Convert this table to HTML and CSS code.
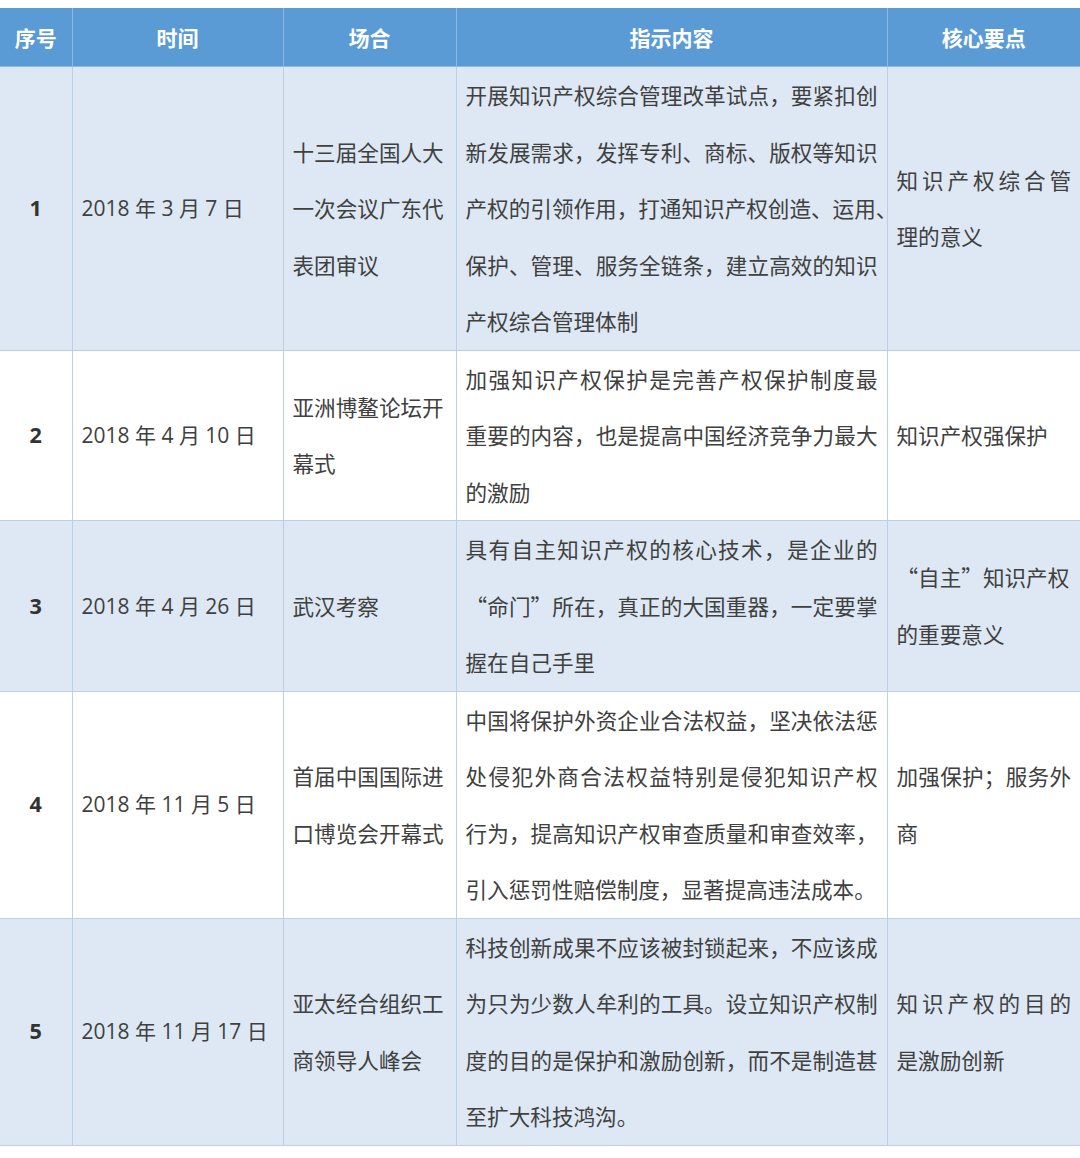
FILE: index.html
```html
<!DOCTYPE html>
<html lang="zh-CN">
<head>
<meta charset="utf-8">
<link rel="stylesheet" href="styles.css">
</head>
<body>
<table class="tbl">
  <colgroup>
    <col class="c1"><col class="c2"><col class="c3"><col class="c4"><col class="c5">
  </colgroup>
  <thead>
    <tr><th>序号</th><th>时间</th><th>场合</th><th>指示内容</th><th>核心要点</th></tr>
  </thead>
  <tbody>
    <tr class="alt">
      <td class="num">1</td>
      <td class="date">2018 年 3 月 7 日</td>
      <td><span class="l">十三届全国人大</span><span class="l">一次会议广东代</span><span class="l">表团审议</span></td>
      <td><span class="l j">开展知识产权综合管理改革试点，要紧扣创</span><span class="l j">新发展需求，发挥专利、商标、版权等知识</span><span class="l j">产权的引领作用，打通知识产权创造、运用、</span><span class="l j">保护、管理、服务全链条，建立高效的知识</span><span class="l">产权综合管理体制</span></td>
      <td><span class="l j">知识产权综合管</span><span class="l">理的意义</span></td>
    </tr>
    <tr>
      <td class="num">2</td>
      <td class="date">2018 年 4 月 10 日</td>
      <td><span class="l">亚洲博鳌论坛开</span><span class="l">幕式</span></td>
      <td><span class="l j">加强知识产权保护是完善产权保护制度最</span><span class="l j">重要的内容，也是提高中国经济竞争力最大</span><span class="l">的激励</span></td>
      <td><span class="l">知识产权强保护</span></td>
    </tr>
    <tr class="alt">
      <td class="num">3</td>
      <td class="date">2018 年 4 月 26 日</td>
      <td><span class="l">武汉考察</span></td>
      <td><span class="l j">具有自主知识产权的核心技术，是企业的</span><span class="l j">“命门”所在，真正的大国重器，一定要掌</span><span class="l">握在自己手里</span></td>
      <td><span class="l">“自主”知识产权</span><span class="l">的重要意义</span></td>
    </tr>
    <tr>
      <td class="num">4</td>
      <td class="date">2018 年 11 月 5 日</td>
      <td><span class="l">首届中国国际进</span><span class="l">口博览会开幕式</span></td>
      <td><span class="l j">中国将保护外资企业合法权益，坚决依法惩</span><span class="l j">处侵犯外商合法权益特别是侵犯知识产权</span><span class="l j">行为，提高知识产权审查质量和审查效率，</span><span class="l">引入惩罚性赔偿制度，显著提高违法成本。</span></td>
      <td><span class="l j">加强保护；服务外</span><span class="l">商</span></td>
    </tr>
    <tr class="alt">
      <td class="num">5</td>
      <td class="date">2018 年 11 月 17 日</td>
      <td><span class="l">亚太经合组织工</span><span class="l">商领导人峰会</span></td>
      <td><span class="l j">科技创新成果不应该被封锁起来，不应该成</span><span class="l j">为只为少数人牟利的工具。设立知识产权制</span><span class="l j">度的目的是保护和激励创新，而不是制造甚</span><span class="l">至扩大科技鸿沟。</span></td>
      <td><span class="l j">知识产权的目的</span><span class="l">是激励创新</span></td>
    </tr>
  </tbody>
</table>
</body>
</html>
```

FILE: styles.css
```css
html, body {
  margin: 0;
  padding: 0;
  background: #ffffff;
}
body {
  padding-top: 8px;
  font-family: "Noto Sans CJK SC", "Noto Sans", sans-serif;
  color: #404040;
}
.tbl {
  width: 1080px;
  table-layout: fixed;
  border-collapse: collapse;
  font-size: 21.6px;
}
.c1 { width: 72px; }
.c2 { width: 211px; }
.c3 { width: 173px; }
.c4 { width: 431px; }
.c5 { width: 193px; }
.tbl th {
  background: #5b9bd5;
  color: #ffffff;
  font-weight: 700;
  height: 58px;
  padding: 0;
  text-align: center;
  vertical-align: middle;
  border-left: 1px solid #8db8e2;
  border-right: 1px solid #8db8e2;
  border-bottom: 1px solid #8db8e2;
  font-size: 21px;
}
.tbl th:first-child { border-left: none; }
.tbl th:last-child { border-right: none; }
.tbl td {
  padding: 0 9px;
  line-height: 56.5px;
  vertical-align: middle;
  text-align: left;
  border: 1px solid #bccfe4;
  white-space: nowrap;
}
.tbl td:first-child { border-left: none; }
.tbl td:last-child { border-right: none; }
.tbl tr.alt td { background: #dde8f4; }
.tbl td.date {
  font-family: "Open Sans", "Noto Sans CJK SC", sans-serif;
  font-size: 21px;
}
.tbl td.num {
  text-align: center;
  font-family: "Open Sans", "Noto Sans CJK SC", sans-serif;
  font-weight: 700;
  color: #333333;
  padding: 0;
}
.l { display: block; }
.j {
  text-align: justify;
  text-align-last: justify;
}
```
